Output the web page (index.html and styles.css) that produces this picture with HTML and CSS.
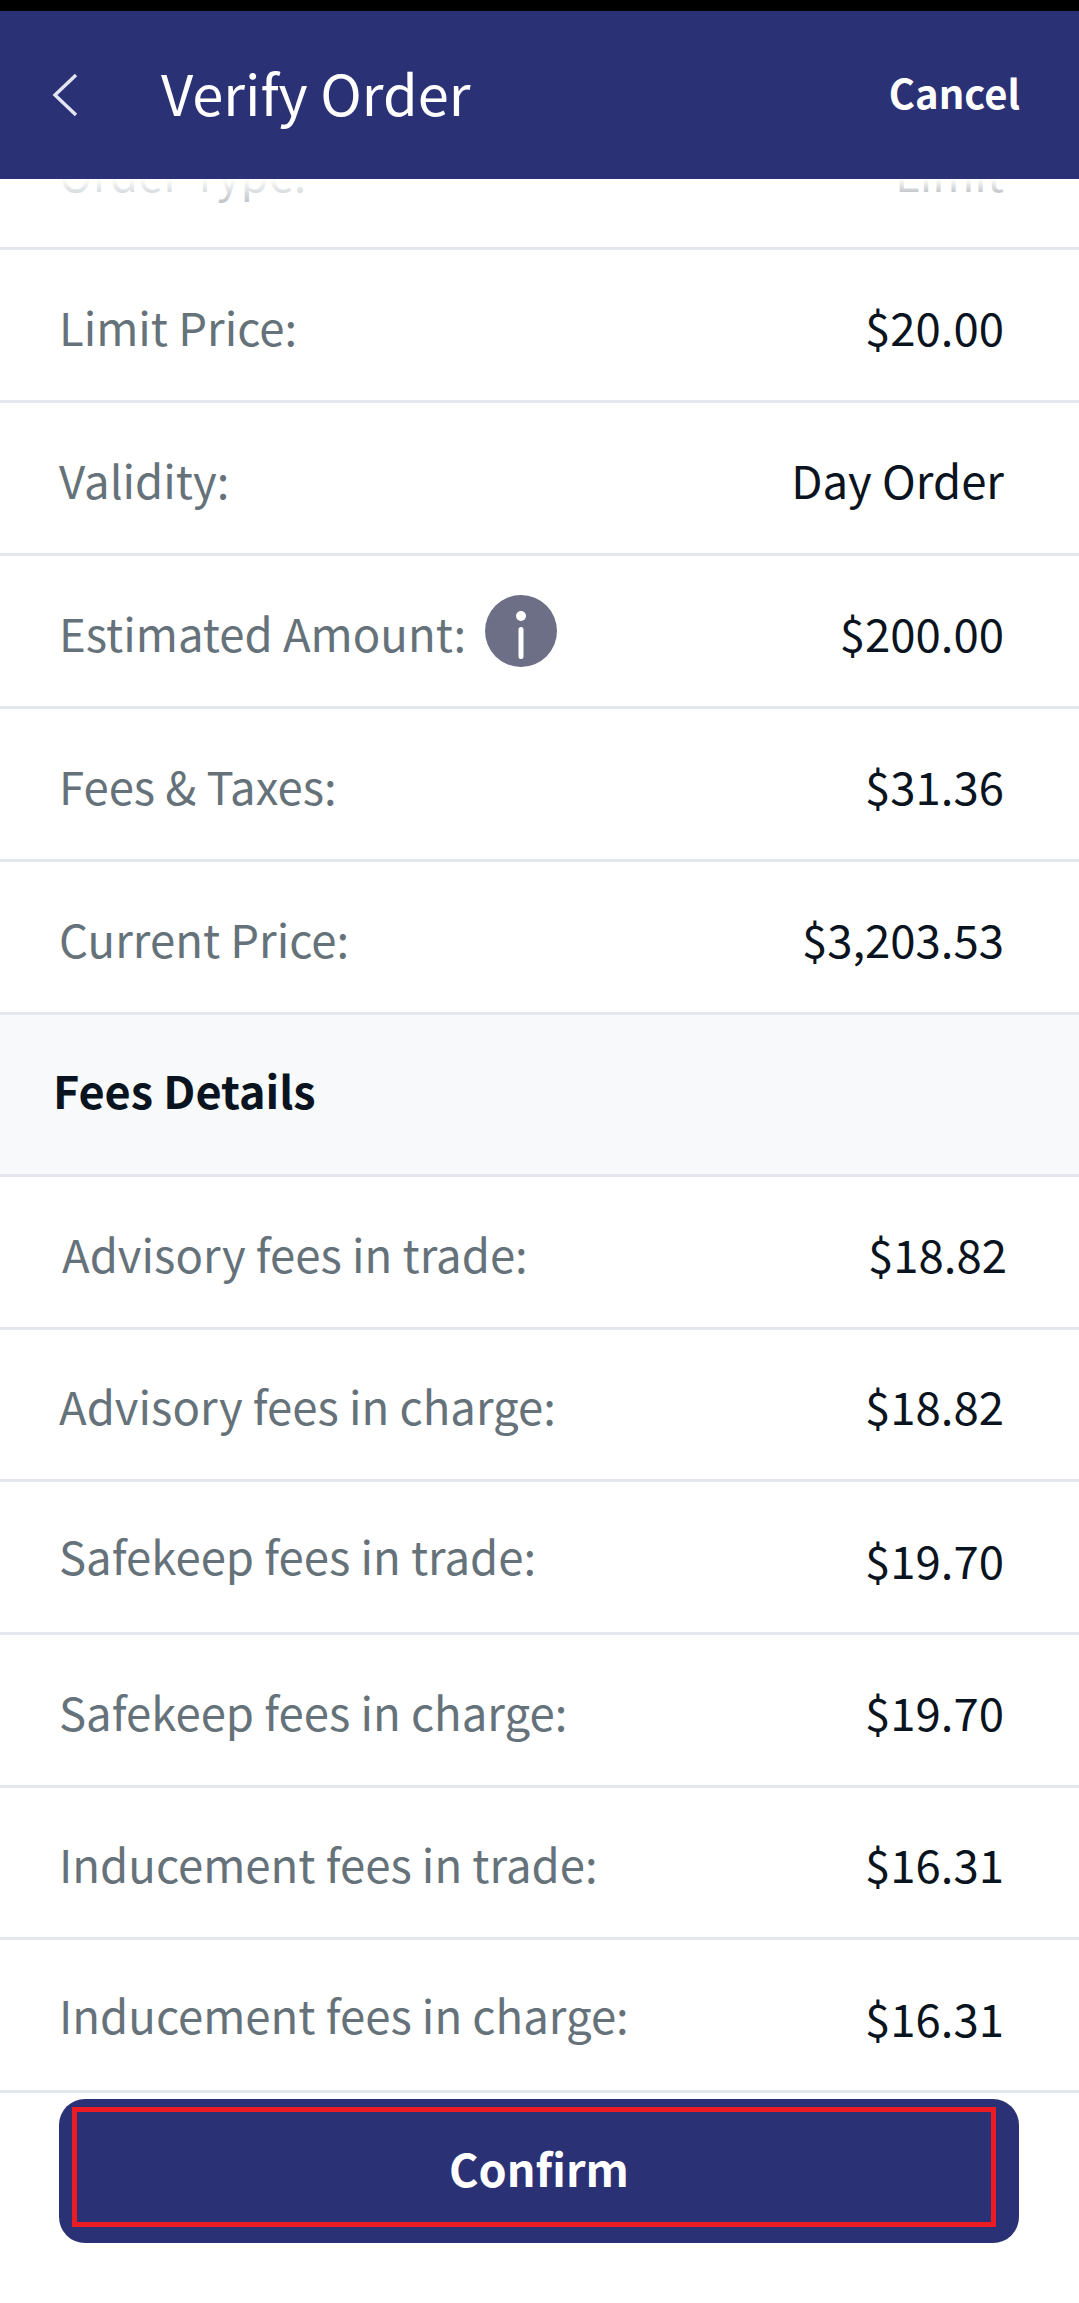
FILE: index.html
```html
<!DOCTYPE html>
<html lang="en">
<head>
<meta charset="utf-8">
<title>Verify Order</title>
<link rel="stylesheet" href="styles.css">
</head>
<body>
<div class="screen">
  <div class="statusbar"></div>
  <header class="topbar">
    <svg class="back" width="26" height="44" viewBox="0 0 26 44" aria-hidden="true"><path d="M24 2 3 22l21 20" fill="none" stroke="#e4e5f2" stroke-width="3.4"/></svg>
    <h1 class="title">Verify Order</h1>
    <span class="cancel">Cancel</span>
  </header>
  <main class="list">
    <div class="fade"></div>
    <div class="row row-clipped"><span class="label">Order Type:</span><span class="value">Limit</span></div>
    <div class="row"><span class="label">Limit Price:</span><span class="value">$20.00</span></div>
    <div class="row"><span class="label">Validity:</span><span class="value">Day Order</span></div>
    <div class="row">
      <span class="label label-icon">Estimated Amount:
        <svg class="info" width="72" height="72" viewBox="0 0 72 72" aria-hidden="true"><circle cx="36" cy="36" r="36" fill="#6c6f85"/><circle cx="36" cy="21" r="5" fill="#fff"/><rect x="33.5" y="32" width="5" height="32" rx="2.5" fill="#fff"/></svg>
      </span>
      <span class="value">$200.00</span>
    </div>
    <div class="row"><span class="label">Fees &amp; Taxes:</span><span class="value">$31.36</span></div>
    <div class="row"><span class="label">Current Price:</span><span class="value">$3,203.53</span></div>
    <div class="section">Fees Details</div>
    <div class="row row-fee row-shift"><span class="label">Advisory fees in trade:</span><span class="value">$18.82</span></div>
    <div class="row row-fee"><span class="label">Advisory fees in charge:</span><span class="value">$18.82</span></div>
    <div class="row row-fee"><span class="label label-up">Safekeep fees in trade:</span><span class="value value-down">$19.70</span></div>
    <div class="row row-fee"><span class="label">Safekeep fees in charge:</span><span class="value">$19.70</span></div>
    <div class="row row-fee"><span class="label">Inducement fees in trade:</span><span class="value">$16.31</span></div>
    <div class="row row-fee"><span class="label label-up">Inducement fees in charge:</span><span class="value value-down">$16.31</span></div>
  </main>
  <footer class="footer">
    <div class="confirm"><div class="confirm-mark"><span class="confirm-text">Confirm</span></div></div>
  </footer>
</div>
</body>
</html>
```
FILE: styles.css
```css
* { box-sizing: border-box; }
html, body { margin: 0; padding: 0; background: #fff; }
body { font-family: "Noto Sans CJK SC", "Noto Sans", sans-serif; }
.screen { width: 1079px; height: 2303px; display: flex; flex-direction: column; overflow: hidden; }
.statusbar { height: 11px; background: #000; flex: none; }
.topbar { height: 168px; flex: none; background: #2b3175; display: flex; align-items: center; padding: 0 59px 6px 52px; color: #fff; position: relative; z-index: 2; }
.back { flex: none; margin: 6px 83px 0 0; }
.title { flex: 1; margin: 0; font-size: 56px; font-weight: 400; line-height: 1; }
.cancel { font-size: 40px; font-weight: 700; line-height: 1; }
.list { height: 1914px; flex: none; overflow: hidden; position: relative; }
.fade { position: absolute; top: 0; left: 0; right: 0; height: 36px; background: linear-gradient(#fff, rgba(255,255,255,.35)); z-index: 1; }
.row { height: 153px; display: flex; justify-content: space-between; align-items: center; padding: 3px 75px 0 59px; border-bottom: 3px solid #e4e8ee; font-size: 45.5px; line-height: 1; }
.row-fee { height: 152.7px; }
.row-clipped { height: 71px; align-items: flex-end; padding-top: 0; padding-bottom: 52px; }
.row-shift { padding: 3px 72px 0 62px; }
.label { color: #66727a; font-weight: 400; display: flex; align-items: center; white-space: nowrap; }
.value { color: #0a1420; }
.label-icon { gap: 19px; }
.info { flex: none; margin-top: -4px; }
.label-up { margin-top: -5px; }
.value-down { margin-top: 2px; }
.section { height: 162px; background: #f8f9fa; border-bottom: 3px solid #e4e8ee; display: flex; align-items: center; padding: 0 0 10px 53px; font-size: 45px; font-weight: 700; color: #0a1420; line-height: 1; }
.footer { flex: 1; padding: 6px 60px 0 59px; background: #fff; }
.confirm { height: 144px; background: #2b3175; border-radius: 26px; padding: 8px 23px 16px 13px; }
.confirm-mark { height: 100%; border: 5px solid #ed1c24; display: flex; align-items: center; justify-content: center; color: #fff; font-size: 45px; font-weight: 700; line-height: 1; }
.confirm-text { margin-left: 10px; }
```
